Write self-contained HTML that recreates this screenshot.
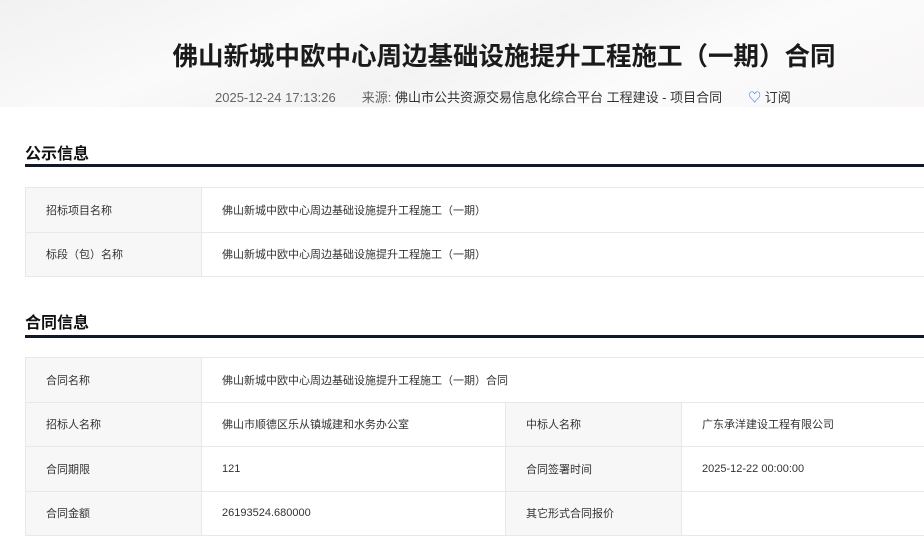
<!DOCTYPE html>
<html><head><meta charset="utf-8"><style>
*{margin:0;padding:0;box-sizing:border-box}
body{width:924px;height:556px;overflow:hidden;background:#fff;font-family:"Liberation Sans","Noto Sans CJK SC",sans-serif;color:#333;position:relative}
.hero{position:absolute;left:0;top:0;width:924px;height:107px;background:linear-gradient(160deg,#f1f1f1 0%,#fafafa 30%,#f3f3f3 50%,#fbfbfb 70%,#f8f6f6 100%)}
.title{position:absolute;left:0;width:1008px;top:36px;text-align:center;font-size:25.5px;font-weight:bold;color:#1a1a1a}
.meta{position:absolute;top:87px;left:215px;font-size:13px;color:#666;white-space:nowrap}
.meta span{color:#333}
.sec{position:absolute;left:25px;width:899px;font-size:16px;font-weight:bold;color:#111;border-bottom:3px solid #111827}
table{position:absolute;left:25px;width:920px;border-collapse:collapse;font-size:11px;color:#333}
td{border:1px solid #e8e8e8;height:44.5px;padding-left:20px}
td.l{background:#f7f7f7;width:176px}
</style></head><body>
<div class="hero"></div>
<div class="title">佛山新城中欧中心周边基础设施提升工程施工（一期）合同</div>
<div class="meta">2025-12-24 17:13:26<span style="color:#666;margin-left:26px">来源: </span><span>佛山市公共资源交易信息化综合平台 工程建设 - 项目合同</span><span style="margin-left:26px;color:#2b6de0">♡</span><span> 订阅</span></div>
<div class="sec" style="top:140px;height:27px">公示信息</div>
<table style="top:187px">
<tr><td class="l">招标项目名称</td><td>佛山新城中欧中心周边基础设施提升工程施工（一期）</td></tr>
<tr><td class="l">标段（包）名称</td><td>佛山新城中欧中心周边基础设施提升工程施工（一期）</td></tr>
</table>
<div class="sec" style="top:309px;height:29px">合同信息</div>
<table style="top:357px">
<tr><td class="l">合同名称</td><td colspan="3">佛山新城中欧中心周边基础设施提升工程施工（一期）合同</td></tr>
<tr><td class="l">招标人名称</td><td style="width:304px">佛山市顺德区乐从镇城建和水务办公室</td><td class="l" style="width:175px">中标人名称</td><td>广东承洋建设工程有限公司</td></tr>
<tr><td class="l">合同期限</td><td>121</td><td class="l">合同签署时间</td><td>2025-12-22 00:00:00</td></tr>
<tr><td class="l">合同金额</td><td>26193524.680000</td><td class="l">其它形式合同报价</td><td></td></tr>
</table>
</body></html>
